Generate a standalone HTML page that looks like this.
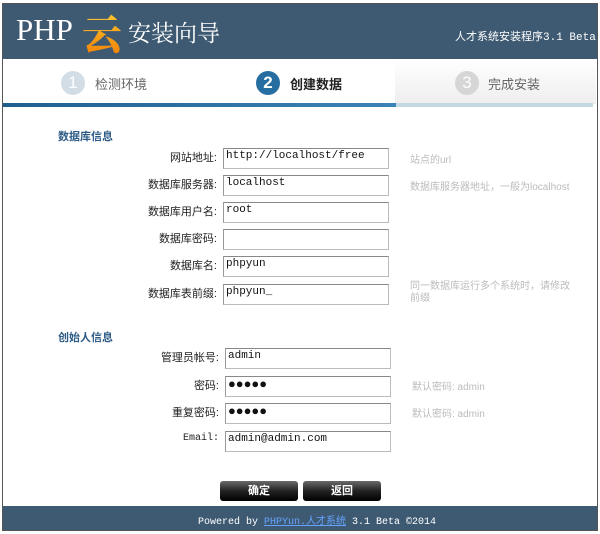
<!DOCTYPE html>
<html><head><meta charset="utf-8"><style>
*{margin:0;padding:0;box-sizing:border-box}
body{width:600px;height:534px;background:#fff;font-family:"Liberation Sans","Noto Sans CJK SC",sans-serif;position:relative;overflow:hidden}
.frame{position:absolute;left:2px;top:3px;width:596px;height:528px;border:1px solid #555;background:#fff}
.hdr{position:absolute;left:3px;top:4px;width:594px;height:55px;background:#3e5a72}
.abs{position:absolute;white-space:nowrap}
.lbl{position:absolute;font-size:11px;color:#222;text-align:right;width:120px;font-family:"Liberation Sans","Noto Sans CJK SC",sans-serif}
.inp{position:absolute;height:21px;border:1px solid #bbb;border-top-color:#888;border-left-color:#999;background:#fff;font-family:"Liberation Mono",monospace;font-size:11px;padding:1px 2px;color:#111}
.hint{position:absolute;font-size:10px;color:#bbb}
.sec{position:absolute;left:58px;font-size:11px;color:#2d5b86;font-weight:bold}
.btn{position:absolute;top:481px;height:20px;width:78px;border-radius:3px;background:linear-gradient(#6a6a6a,#222 50%,#000);color:#fff;font-size:11px;font-weight:bold;text-align:center;line-height:20px}
</style></head><body>
<div class="frame"></div>
<div class="hdr"></div>
<div class="abs" style="left:16px;top:12px;font-family:'Liberation Serif',serif;font-size:31px;color:#fff">PHP</div>
<div class="abs" style="left:82px;top:4px;font-family:'Noto Serif CJK SC',serif;font-size:40px;font-weight:900;background:linear-gradient(#ffd23a,#f07a00);-webkit-background-clip:text;color:transparent">云</div>
<div class="abs" style="left:128px;top:15px;font-family:'Noto Serif CJK SC',serif;font-size:23px;color:#fff">安装向导</div>
<div class="abs" style="left:455px;top:28px;font-size:11px;color:#fff;font-family:'Liberation Mono','Noto Sans CJK SC',monospace">人才系统安装程序3.1 Beta</div>

<div class="abs" style="left:395px;top:59px;width:201px;height:45px;background:linear-gradient(#fff,#eee)"></div>
<div class="abs" style="left:3px;top:103px;width:393px;height:4px;background:linear-gradient(90deg,#1f5f8e,#3b84b8)"></div>
<div class="abs" style="left:396px;top:103px;width:197px;height:4px;background:#c4d8e2"></div>

<div class="abs" style="left:61px;top:71px;width:24px;height:24px;border-radius:50%;background:#d2dde5;color:#fff;font-size:17px;text-align:center;line-height:24px">1</div>
<div class="abs" style="left:95px;top:74px;font-size:13px;color:#666">检测环境</div>
<div class="abs" style="left:256px;top:71px;width:24px;height:24px;border-radius:50%;background:#266ea1;color:#fff;font-size:17px;font-weight:bold;text-align:center;line-height:24px">2</div>
<div class="abs" style="left:290px;top:74px;font-size:13px;color:#222;font-weight:bold">创建数据</div>
<div class="abs" style="left:455px;top:71px;width:24px;height:24px;border-radius:50%;background:#d6d6d6;color:#fff;font-size:17px;text-align:center;line-height:24px">3</div>
<div class="abs" style="left:488px;top:74px;font-size:13px;color:#666">完成安装</div>

<div class="sec" style="top:128px">数据库信息</div>
<div class="lbl" style="left:97px;top:149px">网站地址:</div><div class="inp" style="left:223px;top:148px;width:166px">http://localhost/free</div><div class="hint" style="left:410px;top:151px">站点的url</div>
<div class="lbl" style="left:97px;top:176px">数据库服务器:</div><div class="inp" style="left:223px;top:175px;width:166px">localhost</div><div class="hint" style="left:410px;top:178px">数据库服务器地址，一般为localhost</div>
<div class="lbl" style="left:97px;top:203px">数据库用户名:</div><div class="inp" style="left:223px;top:202px;width:166px">root</div>
<div class="lbl" style="left:97px;top:230px">数据库密码:</div><div class="inp" style="left:223px;top:229px;width:166px"></div>
<div class="lbl" style="left:97px;top:257px">数据库名:</div><div class="inp" style="left:223px;top:256px;width:166px">phpyun</div>
<div class="lbl" style="left:97px;top:285px">数据库表前缀:</div><div class="inp" style="left:223px;top:284px;width:166px">phpyun_</div><div class="hint" style="left:410px;top:281px;width:165px;white-space:normal;line-height:12px">同一数据库运行多个系统时，请修改前缀</div>

<div class="sec" style="top:329px">创始人信息</div>
<div class="lbl" style="left:99px;top:349px">管理员帐号:</div><div class="inp" style="left:225px;top:348px;width:166px">admin</div>
<div class="lbl" style="left:99px;top:377px">密码:</div><div class="inp" style="left:225px;top:376px;width:166px;font-size:13px;line-height:14px">●●●●●</div><div class="hint" style="left:412px;top:378px">默认密码: admin</div>
<div class="lbl" style="left:99px;top:404px">重复密码:</div><div class="inp" style="left:225px;top:403px;width:166px;font-size:13px;line-height:14px">●●●●●</div><div class="hint" style="left:412px;top:405px">默认密码: admin</div>
<div class="lbl" style="left:99px;top:433px;font-family:'Liberation Mono',monospace;font-size:10px">Email:</div><div class="inp" style="left:225px;top:431px;width:166px">admin@admin.com</div>

<div class="btn" style="left:220px">确定</div>
<div class="btn" style="left:303px">返回</div>

<div class="abs" style="left:3px;top:506px;width:594px;height:24px;background:#3e5a72"></div>
<div class="abs" style="left:198px;top:512px;font-family:'Liberation Mono','Noto Sans CJK SC',monospace;font-size:10px;color:#fff">Powered by <span style="color:#66a3ff;text-decoration:underline">PHPYun.人才系统</span> 3.1 Beta ©2014</div>
</body></html>
